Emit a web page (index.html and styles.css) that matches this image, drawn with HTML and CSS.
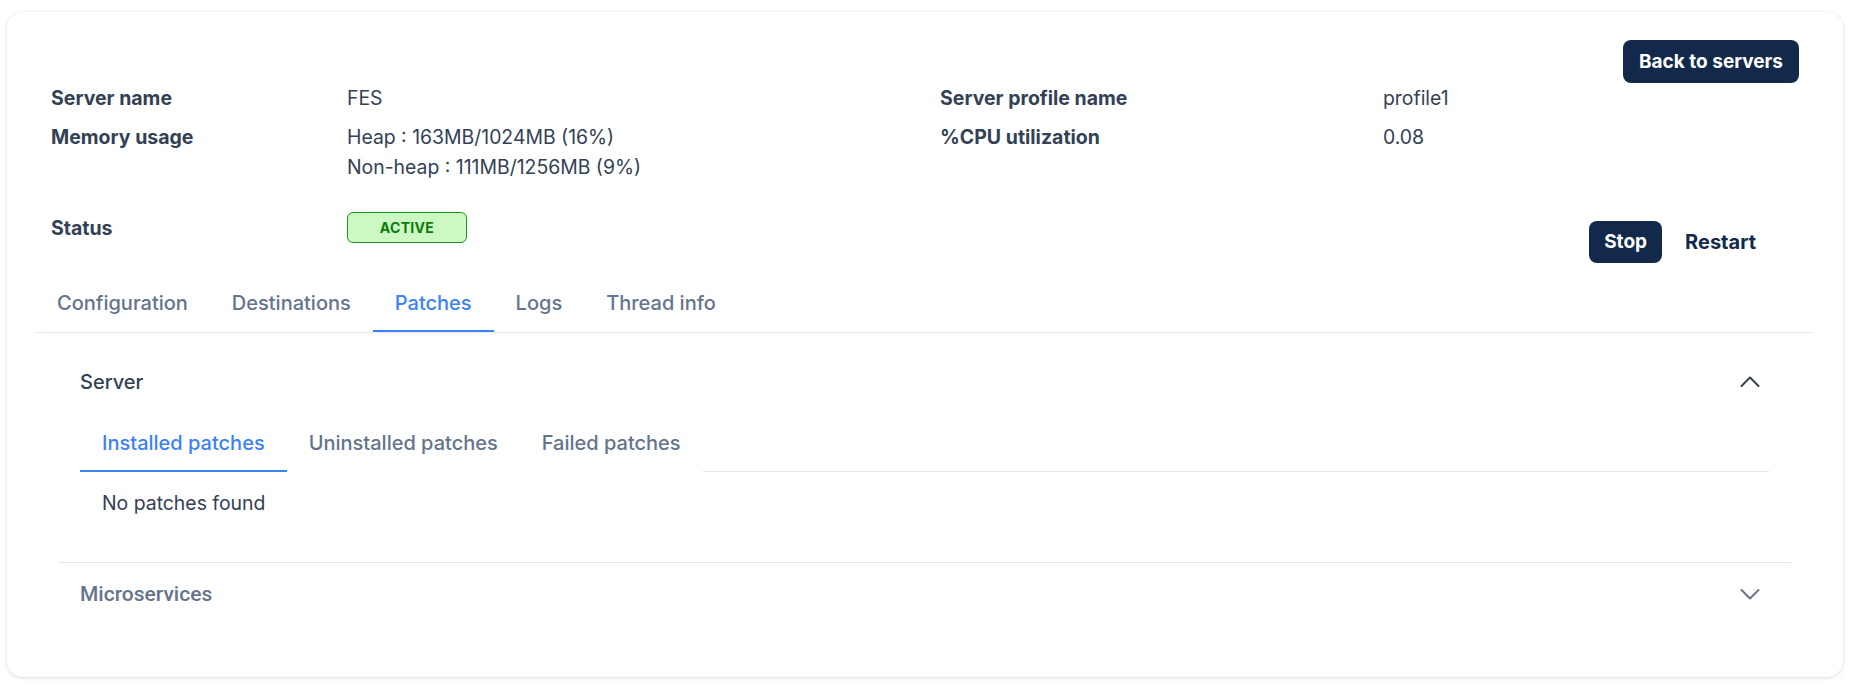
FILE: index.html
```html
<!DOCTYPE html>
<html lang="en">
<head>
<meta charset="utf-8">
<title>Server details</title>
<link rel="stylesheet" href="styles.css">
</head>
<body>
<div class="card">
  <div class="header">
    <div class="top-row">
      <button class="btn btn-dark btn-back">Back to servers</button>
    </div>
    <div class="info-grid">
      <div class="label">Server name</div>
      <div class="value">FES</div>
      <div class="label">Server profile name</div>
      <div class="value">profile1</div>
      <div class="label">Memory usage</div>
      <div class="value">Heap : 163MB/1024MB (16%)<br>Non-heap : 111MB/1256MB (9%)</div>
      <div class="label">%CPU utilization</div>
      <div class="value">0.08</div>
    </div>
    <div class="status-row">
      <div class="status-left">
        <div class="label status-label">Status</div>
        <span class="badge">ACTIVE</span>
      </div>
      <div class="actions">
        <button class="btn btn-dark btn-stop">Stop</button>
        <button class="btn btn-plain">Restart</button>
      </div>
    </div>
  </div>

  <div class="tabs">
    <div class="tab">Configuration</div>
    <div class="tab">Destinations</div>
    <div class="tab active">Patches</div>
    <div class="tab">Logs</div>
    <div class="tab">Thread info</div>
  </div>

  <div class="panel">
    <div class="acc-item open">
      <div class="acc-header">
        <span class="acc-title">Server</span>
        <svg class="chev chev-up" width="20" height="20" viewBox="0 0 20 20"><path d="M1.5 14 L10 5.5 L18.5 14" fill="none" stroke="currentColor" stroke-width="2" stroke-linecap="round" stroke-linejoin="round"/></svg>
      </div>
      <div class="acc-body">
        <div class="subtabs">
          <div class="subtab active">Installed patches</div>
          <div class="subtab">Uninstalled patches</div>
          <div class="subtab">Failed patches</div>
          <div class="subtab-fill"></div>
        </div>
        <div class="empty">No patches found</div>
      </div>
    </div>
    <div class="acc-item closed">
      <div class="acc-header acc-header-2">
        <span class="acc-title muted">Microservices</span>
        <svg class="chev chev-down" width="20" height="20" viewBox="0 0 20 20"><path d="M1.5 6 L10 14.5 L18.5 6" fill="none" stroke="currentColor" stroke-width="2" stroke-linecap="round" stroke-linejoin="round"/></svg>
      </div>
    </div>
  </div>
</div>
</body>
</html>
```

FILE: styles.css
```css
* { box-sizing: border-box; }
html, body { margin: 0; background: #ffffff; }
body {
  padding: 12px 8px 10px 7px;
  font-family: Inter, "Noto Sans", sans-serif;
  color: #334155;
  font-size: 19.4px;
  line-height: 30px;
}
.card {
  background: #fff;
  border-radius: 16px;
  box-shadow: 0 1px 4px rgba(0,0,0,0.13), 0 0 1px rgba(0,0,0,0.08);
  padding: 0 30px 29px 28px;
  height: 665px;
}
.header { padding: 0 14px 0 16px; }
.top-row {
  display: flex;
  justify-content: flex-end;
  padding-top: 28px;
}
.btn {
  font-family: Inter, sans-serif;
  font-weight: 700;
  font-size: 19px;
  border: 0;
  border-radius: 8px;
  cursor: pointer;
  line-height: 22px;
}
.btn-dark { background: #13294b; color: #fff; }
.btn-back { width: 176px; height: 43px; padding: 0; }
.btn-stop { width: 73px; height: 42px; padding: 0; }
.btn-plain { background: transparent; color: #13294b; height: 42px; padding: 0 15px; font-size: 20px; }
.info-grid {
  display: grid;
  grid-template-columns: 296px 593px 443px 1fr;
  row-gap: 9px;
}
.label { font-weight: 700; color: #334155; font-size: 19.5px; }
.value { font-weight: 400; color: #334155; }
.status-row {
  display: flex;
  justify-content: space-between;
  align-items: flex-start;
  margin-top: 30px;
}
.status-left { display: flex; align-items: center; }
.status-label { width: 296px; }
.badge {
  display: inline-flex;
  align-items: center;
  justify-content: center;
  width: 120px;
  height: 31px;
  background: #ccf8c1;
  border: 1px solid #1d961d;
  border-radius: 6px;
  color: #0d7a0d;
  font-weight: 700;
  font-size: 14px;
  letter-spacing: 0.3px;
}
.actions {
  display: flex;
  gap: 8px;
  margin-top: 9px;
  margin-right: 28px;
}
.tabs {
  display: flex;
  margin-top: 9px;
  border-bottom: 1px solid #e2e8f0;
}
.tab {
  padding: 16px 22px 12px;
  font-weight: 500;
  font-size: 20px;
  color: #64748b;
  border-bottom: 2px solid transparent;
}
.tab.active { color: #3b82f6; border-bottom-color: #3b82f6; }
.panel { padding: 25px 22px 0 23px; }
.acc-header {
  display: flex;
  justify-content: space-between;
  align-items: center;
  padding: 9px 22px 13px;
}
.acc-title { font-weight: 500; color: #334155; font-size: 20px; }
.acc-title.muted { font-family: Roboto, sans-serif; color: #64748b; font-size: 21px; }
.chev { margin-right: 9px; }
.chev-up { color: #334155; }
.chev-down { color: #64748b; }
.acc-body { padding: 6px 22px 44px; }
.subtabs { display: flex; }
.subtab {
  padding: 12px 22px 12px 22px;
  font-weight: 500;
  font-size: 20px;
  color: #64748b;
  border-bottom: 2px solid transparent;
}
.subtab.active { color: #3b82f6; border-bottom-color: #3b82f6; }
.subtab-fill { flex: 1; border-bottom: 1px solid #e2e8f0; }
.empty { padding: 16px 22px 0; }
.acc-item.open { border-bottom: 1px solid #e2e8f0; }
.acc-header-2 { padding-top: 16px; padding-bottom: 16px; }
```
